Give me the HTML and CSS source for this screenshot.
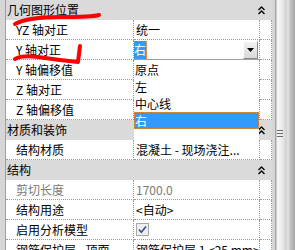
FILE: index.html
```html
<!DOCTYPE html>
<html lang="zh-CN">
<head>
  <meta charset="UTF-8" />
  <title>属性</title>
  <link rel="stylesheet" href="styles.css">
</head>
<body>
  <div class="palette">
    <div class="strip"></div>

    <div class="grid">
      <div class="group">
        <span class="group-name">几何图形位置</span>
        <svg class="toggle" width="7" height="9" viewBox="0 0 7 9"><polyline points="0.5,4 3.5,1 6.5,4" /><polyline points="0.5,8 3.5,5 6.5,8" /></svg>
      </div>
      <div class="row">
        <div class="name">YZ 轴对正</div>
        <div class="value">统一</div>
        <div class="extra"></div>
      </div>
      <div class="row">
        <div class="name">Y 轴对正</div>
        <div class="value combo">
          <span class="combo-sel">右</span>
          <span class="combo-btn">
            <svg width="7" height="4" viewBox="0 0 7 4"><polygon points="0,0 7,0 3.5,4" /></svg>
          </span>
          <ul class="dropdown">
            <li>原点</li>
            <li>左</li>
            <li>中心线</li>
            <li class="active">右</li>
          </ul>
        </div>
        <div class="extra"></div>
      </div>
      <div class="row">
        <div class="name">Y 轴偏移值</div>
        <div class="value"></div>
        <div class="extra"></div>
      </div>
      <div class="row">
        <div class="name">Z 轴对正</div>
        <div class="value"></div>
        <div class="extra"></div>
      </div>
      <div class="row">
        <div class="name">Z 轴偏移值</div>
        <div class="value"></div>
        <div class="extra"></div>
      </div>

      <div class="group">
        <span class="group-name">材质和装饰</span>
        <svg class="toggle" width="7" height="9" viewBox="0 0 7 9"><polyline points="0.5,4 3.5,1 6.5,4" /><polyline points="0.5,8 3.5,5 6.5,8" /></svg>
      </div>
      <div class="row">
        <div class="name">结构材质</div>
        <div class="value">混凝土 - 现场浇注...</div>
        <div class="extra"></div>
      </div>

      <div class="group">
        <span class="group-name">结构</span>
        <svg class="toggle" width="7" height="9" viewBox="0 0 7 9"><polyline points="0.5,4 3.5,1 6.5,4" /><polyline points="0.5,8 3.5,5 6.5,8" /></svg>
      </div>
      <div class="row">
        <div class="name disabled">剪切长度</div>
        <div class="value disabled">1700.0</div>
        <div class="extra"></div>
      </div>
      <div class="row">
        <div class="name">结构用途</div>
        <div class="value">&lt;自动&gt;</div>
        <div class="extra"></div>
      </div>
      <div class="row">
        <div class="name">启用分析模型</div>
        <div class="value">
          <svg class="check" width="13" height="13" viewBox="0 0 13 13">
            <rect x="0.5" y="0.5" width="12" height="12" fill="#eeeeee" stroke="#a8a8a8" />
            <path d="M3,6.5 L5.3,9.2 L10,3.5" fill="none" stroke="#3d4f9c" stroke-width="1.7" />
          </svg>
        </div>
        <div class="extra"></div>
      </div>
      <div class="row">
        <div class="name">钢筋保护层 - 顶面</div>
        <div class="value">钢筋保护层 1 &lt;25 mm&gt;</div>
        <div class="extra"></div>
      </div>
    </div>

    <div class="scrollbar">
      <div class="grip"></div>
    </div>

    <!-- hand drawn marks over the screenshot -->
    <svg class="marks" width="295" height="250" viewBox="0 0 295 250">
      <path d="M15,24 Q28,17 60,17 T99,15" />
      <path d="M15,59 Q22,55 38,57 Q58,60 78,62 L80,46" />
    </svg>
  </div>
</body>
</html>
```

FILE: styles.css
```css
body {
  margin: 0;
  font-family: "Noto Sans CJK SC", sans-serif;
  font-size: 12px;
  color: #000;
  background: #d6d6d6;
  overflow: hidden;
}
.palette {
  display: flex;
  width: 295px;
  height: 250px;
  position: relative;
  overflow: hidden;
}
.strip {
  width: 5px;
  flex: none;
  background: #d6d6d6;
  border-right: 1px solid #a0a0a0;
}
.grid {
  width: 266px;
  flex: none;
  background: #fff;
}
.group {
  display: flex;
  align-items: center;
  height: 20px;
  line-height: 20px;
  background: #dadada;
}
.group-name {
  flex: 1;
  padding-left: 1px;
  white-space: nowrap;
}
.toggle {
  margin-right: 7px;
  fill: none;
  stroke: #000;
  stroke-width: 1.3;
}
.row {
  display: flex;
  height: 20px;
}
.row > div {
  box-sizing: border-box;
  height: 20px;
  line-height: 19px;
  border-bottom: 1px dotted #9a9a9a;
  white-space: nowrap;
  overflow: hidden;
}
.name {
  width: 128px;
  padding-left: 10px;
  border-right: 1px dotted #9a9a9a;
}
.value {
  width: 126px;
  padding-left: 2px;
  border-right: 1px dotted #9a9a9a;
  display: flex;
  align-items: center;
}
.extra {
  width: 12px;
  border-right: 1px dotted #9a9a9a;
}
.disabled {
  color: #7a7a7a;
}
.row > .combo {
  padding-left: 0;
  overflow: visible;
  position: relative;
  border-bottom: none;
}
.combo-sel {
  height: 18px;
  line-height: 18px;
  background: #3399ff;
  color: #fff;
  border-right: 1px solid #d9903f;
}
.combo-btn {
  margin-left: auto;
  margin-right: 1px;
  width: 15px;
  height: 18px;
  box-sizing: border-box;
  display: flex;
  align-items: center;
  justify-content: center;
  background: linear-gradient(#f2f2f2, #d8d8d8);
  border: 1px solid #fff;
  border-right-color: #8c8c8c;
  border-bottom-color: #8c8c8c;
}
.combo-btn polygon {
  fill: #000;
}
.dropdown {
  position: absolute;
  left: 0;
  top: 19px;
  width: 125px;
  height: 81px;
  box-sizing: border-box;
  margin: 0;
  padding: 1px 0 0;
  list-style: none;
  background: #fff;
  border-top: 1px solid #a0a0a0;
  z-index: 2;
}
.dropdown li {
  height: 17px;
  line-height: 17px;
  padding-left: 1px;
}
.dropdown li.active {
  background: #3399ff;
  color: #fff;
  outline: 1px dotted #d9903f;
  outline-offset: -1px;
}
.check {
  display: block;
}
.scrollbar {
  width: 23px;
  flex: none;
  box-sizing: border-box;
  padding-top: 130px;
  background: linear-gradient(to right, #d6d6d6 0, #d6d6d6 3px, #a4a4a4 3px, #a4a4a4 4px,
    #f6f6f6 5px, #ececec 10px, #d2d2d2 14px, #e2e2e2 16px, #bdbdbd 19px, #a6a6a6 23px);
}
.grip {
  width: 6px;
  height: 7px;
  margin-left: 5px;
  background: repeating-linear-gradient(#6a6a6a 0, #6a6a6a 1px, transparent 1px, transparent 3px);
}
.marks {
  position: absolute;
  left: 0;
  top: 0;
  pointer-events: none;
}
.marks path {
  fill: none;
  stroke: #ff0000;
  stroke-width: 4;
  stroke-linecap: round;
  stroke-linejoin: round;
}
```
